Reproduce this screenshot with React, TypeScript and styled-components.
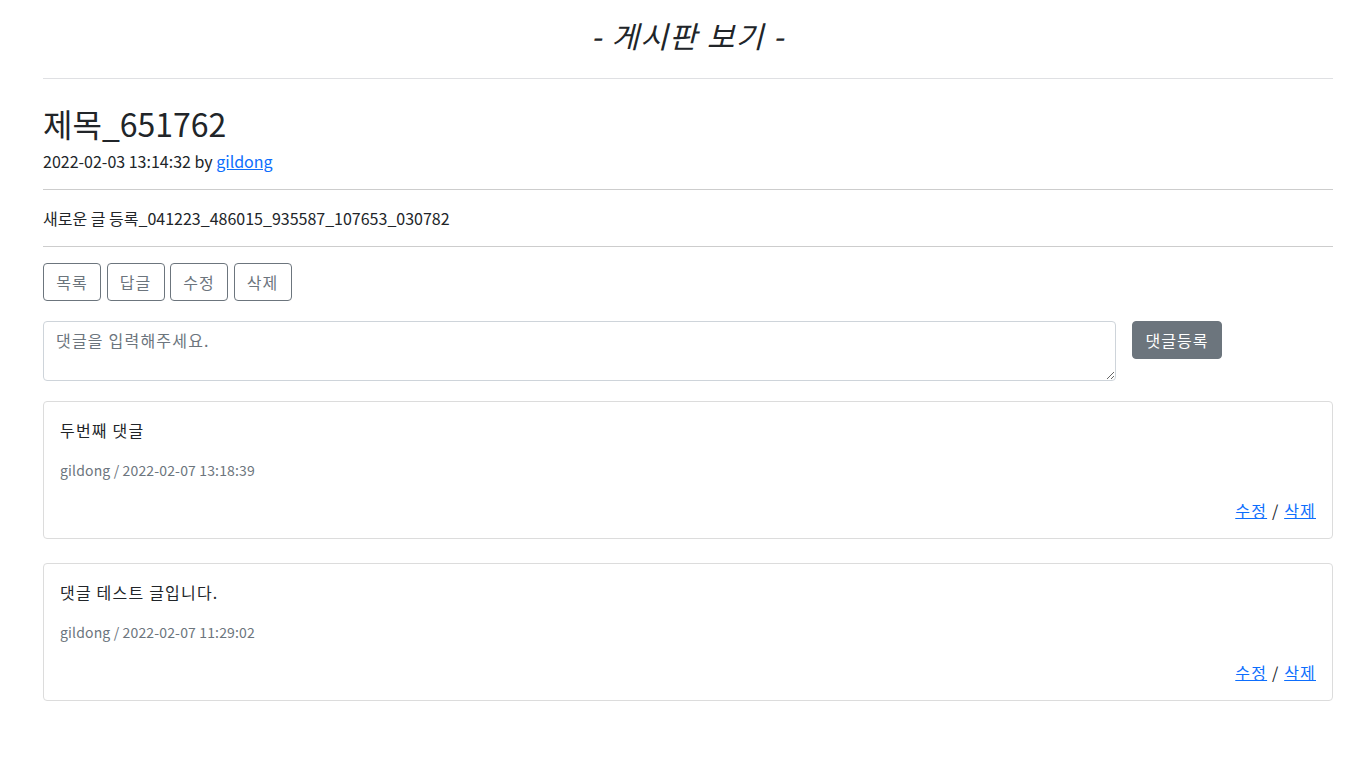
import React from "react";
import styled, { createGlobalStyle } from "styled-components";

const GlobalStyle = createGlobalStyle`
  body {
    margin: 0;
    background: #fff;
    color: #212529;
    font-family: "Noto Sans CJK KR", "Noto Sans", sans-serif;
    font-size: 16px;
    line-height: 1.5;
  }
`;

const Page = styled.div`
  padding: 0 26px 40px 43px;
`;

const BoardTitle = styled.h3`
  margin: 17px 0 0;
  font-size: 30px;
  font-weight: 400;
  font-style: italic;
  letter-spacing: 1.5px;
  line-height: 36px;
  text-align: center;
`;

const Divider = styled.hr<{ $light?: boolean; $top: number }>`
  margin: ${(p) => p.$top}px 0 0;
  border: 0;
  border-top: 1px solid ${(p) => (p.$light ? "#dfe0e3" : "#cdcdcd")};
`;

const PostTitle = styled.h2`
  margin: 25px 0 0;
  font-size: 32px;
  font-weight: 400;
  line-height: 38px;
`;

const Meta = styled.div`
  margin-top: 7px;
  line-height: 24px;
  margin-bottom: 16px;
`;

const Link = styled.a`
  color: #0d6efd;
  text-decoration: underline;
  cursor: pointer;
`;

const Content = styled.div`
  margin: 16px 0;
  line-height: 24px;
`;

const ButtonRow = styled.div`
  display: flex;
  gap: 5.5px;
  margin-top: 16px;
`;

const OutlineButton = styled.button`
  height: 38px;
  width: 58px;
  padding: 0;
  border: 1px solid #6c757d;
  border-radius: 4px;
  background: #fff;
  color: #6c757d;
  font-family: inherit;
  font-size: 16px;
  letter-spacing: 1px;
  line-height: 24px;
  cursor: pointer;
`;

const CommentForm = styled.form`
  display: grid;
  grid-template-columns: 1fr 201px;
  gap: 16px;
  margin-top: 20px;
  align-items: start;
`;

const CommentInput = styled.textarea`
  box-sizing: border-box;
  height: 60px;
  padding: 6px 12px;
  border: 1px solid #ced4da;
  border-radius: 4px;
  font-family: inherit;
  font-size: 16px;
  letter-spacing: 1.2px;
  line-height: 24px;
  color: #212529;
  resize: vertical;
  &::placeholder {
    color: #6c757d;
  }
`;

const SubmitButton = styled.button`
  justify-self: start;
  height: 38px;
  width: 90px;
  padding: 0;
  border: 1px solid #6c757d;
  border-radius: 4px;
  background: #6c757d;
  color: #fff;
  font-family: inherit;
  font-size: 16px;
  letter-spacing: 1px;
  line-height: 24px;
  cursor: pointer;
`;

const CommentList = styled.div`
  display: flex;
  flex-direction: column;
  gap: 24px;
  margin-top: 20px;
`;

const CommentCard = styled.div`
  border: 1px solid #dcdcdc;
  border-radius: 4px;
  padding: 16px;
`;

const CommentText = styled.div`
  line-height: 24px;
  letter-spacing: 1.2px;
`;

const CommentMeta = styled.div`
  margin-top: 18px;
  font-size: 14px;
  letter-spacing: 0.15px;
  line-height: 21px;
  color: #6c757d;
`;

const CommentActions = styled.div`
  margin-top: 17px;
  text-align: right;
  line-height: 24px;
  letter-spacing: 1.2px;
`;

const comments = [
  { id: 2, text: "두번째 댓글", writer: "gildong", date: "2022-02-07 13:18:39" },
  { id: 1, text: "댓글 테스트 글입니다.", writer: "gildong", date: "2022-02-07 11:29:02" },
];

export default function App() {
  return (
    <>
      <GlobalStyle />
      <Page>
        <BoardTitle>- 게시판 보기 -</BoardTitle>
        <Divider $light $top={25} />

        <PostTitle>제목_651762</PostTitle>
        <Meta>
          2022-02-03 13:14:32 by <Link>gildong</Link>
        </Meta>
        <Divider $top={0} />
        <Content>새로운 글 등록_041223_486015_935587_107653_030782</Content>
        <Divider $top={0} />

        <ButtonRow>
          <OutlineButton>목록</OutlineButton>
          <OutlineButton>답글</OutlineButton>
          <OutlineButton>수정</OutlineButton>
          <OutlineButton>삭제</OutlineButton>
        </ButtonRow>

        <CommentForm onSubmit={(e) => e.preventDefault()}>
          <CommentInput placeholder="댓글을 입력해주세요." />
          <SubmitButton type="submit">댓글등록</SubmitButton>
        </CommentForm>

        <CommentList>
          {comments.map((c) => (
            <CommentCard key={c.id}>
              <CommentText>{c.text}</CommentText>
              <CommentMeta>
                {c.writer} / {c.date}
              </CommentMeta>
              <CommentActions>
                <Link>수정</Link> / <Link>삭제</Link>
              </CommentActions>
            </CommentCard>
          ))}
        </CommentList>
      </Page>
    </>
  );
}
